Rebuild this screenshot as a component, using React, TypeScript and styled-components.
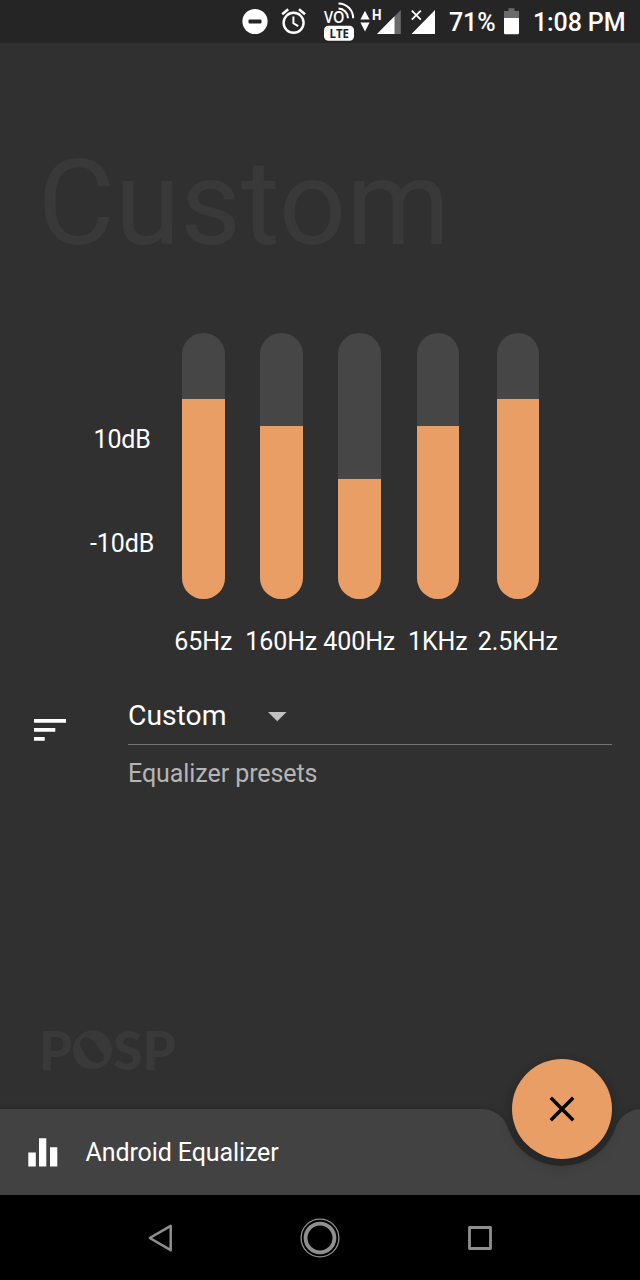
import React from 'react';
import styled, { createGlobalStyle } from 'styled-components';

const colors = {
  background: '#303030',
  status: '#252525',
  track: '#464646',
  accent: '#e89e64',
  ghost: '#393939',
  bar: '#424242',
  nav: '#8f8f8f',
};

const GlobalStyle = createGlobalStyle`
  * { box-sizing: border-box; }
  body { margin: 0; background: ${colors.background}; font-family: Roboto, 'Liberation Sans', sans-serif; }
  svg { display: block; flex: none; overflow: visible; }
`;

const Screen = styled.div`
  width: 640px;
  height: 1280px;
  display: flex;
  flex-direction: column;
  background: ${colors.background};
  color: #fff;
  overflow: hidden;
`;

const StatusBar = styled.header`
  height: 43px;
  flex: none;
  display: flex;
  align-items: flex-start;
  padding-left: 242px;
  background: ${colors.status};
`;

const StatusSlot = styled.div<{ $width: number }>`
  width: ${(p) => p.$width}px;
  flex: none;
`;

const StatusText = styled.span<{ $width: number }>`
  width: ${(p) => p.$width}px;
  flex: none;
  font-size: 25px;
  letter-spacing: -0.12px;
  font-weight: 500;
  line-height: 46px;
  white-space: nowrap;
`;

const Main = styled.main`
  height: 1066px;
  flex: none;
  display: flex;
  flex-direction: column;
`;

const GhostTitle = styled.h1`
  margin: 90px 0 0 37.5px;
  height: 141px;
  font-size: 118.5px;
  line-height: 141px;
  font-weight: 400;
  color: ${colors.ghost};
`;

const Equalizer = styled.section`
  margin-top: 59px;
  display: flex;
`;

const Scale = styled.div`
  width: 164.25px;
  padding: 92px 0 0 80px;
  display: flex;
  flex-direction: column;
  align-items: center;
  gap: 74px;
`;

const Label = styled.span`
  font-size: 25px;
  letter-spacing: -0.12px;
  line-height: 30px;
  white-space: nowrap;
`;

const Bands = styled.div`
  display: grid;
  grid-template-columns: 78px 78px 78px 79px 81px;
`;

const Band = styled.div`
  display: flex;
  flex-direction: column;
  align-items: center;
  gap: 28px;
`;

const Track = styled.div`
  width: 42.5px;
  height: 265.5px;
  border-radius: 21.25px;
  background: ${colors.track};
  overflow: hidden;
  display: flex;
  align-items: flex-end;
`;

const Fill = styled.div`
  width: 100%;
  background: ${colors.accent};
`;

const PresetRow = styled.section`
  margin-top: 39px;
  display: flex;
  padding: 0 28.5px 0 34px;
`;

const PresetIcon = styled.div`
  width: 94px;
  padding-top: 23px;
`;

const PresetField = styled.div`
  flex: 1;
`;

const Select = styled.div`
  height: 49px;
  display: flex;
  align-items: flex-start;
  gap: 41.5px;
  border-bottom: 1.5px solid #757575;
  font-size: 28.3px;
  line-height: 40px;
  svg { margin-top: 16px; }
`;

const Hint = styled.div`
  margin-top: 14px;
  font-size: 25px;
  letter-spacing: -0.07px;
  line-height: 30px;
  color: #b5b5b5;
`;

const Brand = styled.div`
  margin: auto 0 32px 39px;
  height: 55px;
  display: flex;
  align-items: center;
  font-family: Lato, sans-serif;
  font-size: 53px;
  font-weight: 900;
  line-height: 55px;
  color: #393939;
`;

const BottomBar = styled.footer`
  position: relative;
  height: 86px;
  flex: none;
  display: flex;
  align-items: center;
  padding-left: 28px;
`;

const BarShape = styled.svg`
  position: absolute;
  left: 0;
  top: 0;
  filter: drop-shadow(0 0 3px rgba(0, 0, 0, 0.2));
`;

const BarLabel = styled.span`
  position: relative;
  margin-left: 27.5px;
  font-size: 25px;
  letter-spacing: -0.1px;
`;

const BarIcon = styled.svg`
  position: relative;
`;

const Fab = styled.button`
  position: absolute;
  left: 512px;
  top: -50px;
  width: 100px;
  height: 100px;
  padding: 0;
  border: 0;
  border-radius: 50%;
  background: ${colors.accent};
  display: flex;
  align-items: center;
  justify-content: center;
  box-shadow: 0 6px 14px rgba(0, 0, 0, 0.18), 0 2px 8px rgba(0, 0, 0, 0.1);
`;

const NavBar = styled.nav`
  flex: 1;
  background: #000;
  display: flex;
  justify-content: center;
  align-items: center;
  gap: 120px;
`;

const bands = [
  { name: '65Hz', level: 199.5 },
  { name: '160Hz', level: 172.5 },
  { name: '400Hz', level: 119.5 },
  { name: '1KHz', level: 172.5 },
  { name: '2.5KHz', level: 199.5 },
];

const DndIcon = () => (
  <svg width="26" height="43">
    <circle cx="13" cy="21.5" r="12.6" fill="#fff" />
    <rect x="6.5" y="19.5" width="13" height="4" rx="1" fill={colors.status} />
  </svg>
);

const AlarmIcon = () => (
  <svg width="26" height="43" fill="none" stroke="#fff" strokeWidth="2.4">
    <circle cx="12.6" cy="22.8" r="10" />
    <path d="M12.4 16.5V23.3L17.2 26.2" strokeWidth="2" />
    <path d="M1.2 14.2L7.2 9.3M24 14.2L18 9.3" strokeWidth="2.6" />
  </svg>
);

const VolteIcon = () => (
  <svg width="32" height="43">
    <text x="0" y="23.2" fontSize="16.5" fontWeight="600" fontFamily="Open Sans, sans-serif" fill="#fff" textLength="20.5" lengthAdjust="spacingAndGlyphs">VO</text>
    <g fill="none" stroke="#fff" strokeWidth="2">
      <path d="M14.5 8.6A9.6 9.6 0 0 1 24 18.2" />
      <path d="M14.5 3.4A14.8 14.8 0 0 1 29.2 18.2" />
    </g>
    <rect x="0" y="25.8" width="30" height="15" rx="4.5" fill="#fff" />
    <text x="5.5" y="38" fontSize="12.5" fontWeight="700" fontFamily="Open Sans, sans-serif" fill="#222" textLength="19.5" lengthAdjust="spacingAndGlyphs">LTE</text>
  </svg>
);

const SignalIcon = () => (
  <svg width="42" height="43">
    <path d="M5 10.8L9.6 19.6H.4ZM5 31.4L.4 22.6H9.6Z" fill="#fff" />
    <text x="12" y="19.8" fontSize="14" fontWeight="700" fill="#fff" textLength="9.5" lengthAdjust="spacingAndGlyphs">H</text>
    <path d="M40.8 10V34H17Z" fill="#6b6b6b" />
    <path d="M34.5 16.3V34H17Z" fill="#fff" />
  </svg>
);

const NoSignalIcon = () => (
  <svg width="25" height="43">
    <path d="M24 10V34H.5L11 23.3L13 21.2Z" fill="#fff" />
    <path d="M.8 10.6L9.8 19.6M9.8 10.6L.8 19.6" stroke="#fff" strokeWidth="1.8" />
  </svg>
);

const BatteryIcon = () => (
  <svg width="16" height="43">
    <path d="M4.5 8.2H10.5V11H15V18.5H0V11H4.5Z" fill="#6b6b6b" />
    <path d="M0 18H15V33Q15 34.3 13.7 34.3H1.3Q0 34.3 0 33Z" fill="#fff" />
  </svg>
);

export default function App() {
  return (
    <>
      <GlobalStyle />
      <Screen>
        <StatusBar>
          <StatusSlot $width={39}><DndIcon /></StatusSlot>
          <StatusSlot $width={43}><AlarmIcon /></StatusSlot>
          <StatusSlot $width={36}><VolteIcon /></StatusSlot>
          <StatusSlot $width={50.5}><SignalIcon /></StatusSlot>
          <StatusSlot $width={38.5}><NoSignalIcon /></StatusSlot>
          <StatusText $width={55}>71%</StatusText>
          <StatusSlot $width={29}><BatteryIcon /></StatusSlot>
          <StatusText $width={100}>1:08 PM</StatusText>
        </StatusBar>
        <Main>
          <GhostTitle>Custom</GhostTitle>
          <Equalizer>
            <Scale>
              <Label>10dB</Label>
              <Label>-10dB</Label>
            </Scale>
            <Bands>
              {bands.map((band) => (
                <Band key={band.name}>
                  <Track>
                    <Fill style={{ height: band.level }} />
                  </Track>
                  <Label>{band.name}</Label>
                </Band>
              ))}
            </Bands>
          </Equalizer>
          <PresetRow>
            <PresetIcon>
              <svg width="32" height="22" fill="#fff">
                <path d="M0 0H32V3.7H0ZM0 9.1H21.3V12.7H0ZM0 18.1H10.7V21.8H0Z" />
              </svg>
            </PresetIcon>
            <PresetField>
              <Select>
                <span>Custom</span>
                <svg width="19" height="9"><path d="M0 0H18.5L9.25 9.2Z" fill="#c1c1c1" /></svg>
              </Select>
              <Hint>Equalizer presets</Hint>
            </PresetField>
          </PresetRow>
          <Brand>
            <span>P</span>
            <svg width="41" height="42" viewBox="0 0 42 42">
              <path fillRule="evenodd" fill="#393939" d="M21 1A20 20 0 1 1 21 41A20 20 0 1 1 21 1ZM14 8C8 9 7 15 10 20C13 24 14 28 18 31C23 35 30 35 32.5 31C34 27 31 23 28 20C25 15 21 8 14 8Z" />
            </svg>
            <span>SP</span>
          </Brand>
        </Main>
        <BottomBar>
          <BarShape width="640" height="86">
            <path
              fill={colors.bar}
              d="M-10 0H481.7A27.6 27.6 0 0 1 507.8 18.6A57 57 0 0 0 615.6 18.6A27.6 27.6 0 0 1 641.7 0H660V86H-10Z"
            />
          </BarShape>
          <BarIcon width="30" height="29" fill="#fff">
            <path d="M.3 14.5H7.8V28.5H.3ZM11 .3H18.3V28.5H11ZM22 9.3H29.3V28.5H22Z" />
          </BarIcon>
          <BarLabel>Android Equalizer</BarLabel>
          <Fab aria-label="Close">
            <svg width="24" height="24" stroke="#000" strokeWidth="3.4">
              <path d="M.8 .8L23.2 23.2M23.2 .8L.8 23.2" />
            </svg>
          </Fab>
        </BottomBar>
        <NavBar>
          <svg width="40" height="40" fill="none" stroke={colors.nav} strokeWidth="2.5" strokeLinejoin="round">
            <path d="M9.8 20L30.7 7.8V32.2Z" />
          </svg>
          <svg width="40" height="40" fill="none" stroke={colors.nav}>
            <circle cx="20" cy="20" r="18.9" strokeWidth="1.3" />
            <circle cx="20" cy="20" r="14.4" strokeWidth="3.9" />
          </svg>
          <svg width="40" height="40" fill="none" stroke={colors.nav} strokeWidth="2.8" strokeLinejoin="round">
            <rect x="9.5" y="9.5" width="21" height="21" />
          </svg>
        </NavBar>
      </Screen>
    </>
  );
}
